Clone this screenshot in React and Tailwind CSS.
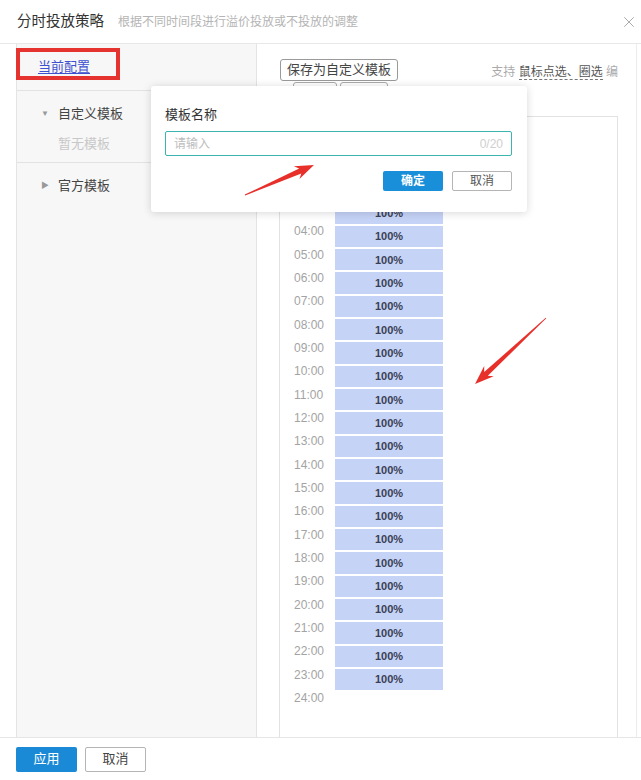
import React from "react";
import { X } from "lucide-react";

const times = Array.from({ length: 25 }, (_, i) => `${String(i).padStart(2, "0")}:00`);

function arrowPoints(x1, y1, x2, y2) {
  const dx = x2 - x1, dy = y2 - y1;
  const len = Math.hypot(dx, dy);
  const ux = dx / len, uy = dy / len;
  const nx = -uy, ny = ux;
  const headLen = 17;
  const bx = x2 - ux * headLen, by = y2 - uy * headLen;
  const p = (x, y) => `${x.toFixed(1)},${y.toFixed(1)}`;
  return [
    p(x1 + nx * 0.4, y1 + ny * 0.4),
    p(bx + nx * 2.6 + ux * 2, by + ny * 2.6 + uy * 2),
    p(bx + nx * 7 - ux * 2, by + ny * 7 - uy * 2),
    p(x2, y2),
    p(bx - nx * 7 - ux * 2, by - ny * 7 - uy * 2),
    p(bx - nx * 2.6 + ux * 2, by - ny * 2.6 + uy * 2),
    p(x1 - nx * 0.4, y1 - ny * 0.4),
  ].join(" ");
}

export default function App() {
  return (
    <div className="relative w-[641px] h-[780px] bg-white overflow-hidden flex flex-col font-['Liberation_Sans','Noto_Sans_CJK_SC',sans-serif] text-[#333]">
      {/* Header */}
      <div className="h-[44px] shrink-0 flex items-center pl-[17px] pr-[3px] border-b border-[#e8e8e8]">
        <span className="text-[14.5px] text-[#333]">分时投放策略</span>
        <span className="ml-[14px] text-[12px] text-[#b4b4b4]">根据不同时间段进行溢价投放或不投放的调整</span>
        <X className="ml-auto" size={18} strokeWidth={1.1} color="#999" />
      </div>

      {/* Body */}
      <div className="flex-1 min-h-0 flex">
        {/* Left panel */}
        <div className="ml-[16px] w-[241px] shrink-0 bg-[#f7f7f7] border-l border-r border-[#e4e4e4] flex flex-col">
          <div className="h-[47px] border-b border-[#e2e2e2] pt-[4px]">
            <div className="w-[104px] h-[32px] -ml-px border-4 border-[#e5332f] flex items-center pl-[18px]">
              <span className="mt-[6px] text-[13px] text-[#3f51cf] underline underline-offset-2">当前配置</span>
            </div>
          </div>
          <div className="h-[72px] border-b border-[#e2e2e2] pt-[13px]">
            <div className="h-[20px] flex items-center pl-[24px]">
              <span className="text-[8px] text-[#999] w-[17px]">▼</span>
              <span className="text-[13px] text-[#444]">自定义模板</span>
            </div>
            <div className="h-[20px] mt-[10px] flex items-center pl-[41px]">
              <span className="text-[13px] text-[#c8c8c8]">暂无模板</span>
            </div>
          </div>
          <div className="pt-[13px]">
            <div className="h-[20px] flex items-center pl-[24px]">
              <span className="text-[8px] text-[#999] w-[17px]">▶</span>
              <span className="text-[13px] text-[#444]">官方模板</span>
            </div>
          </div>
        </div>

        {/* Right panel */}
        <div className="flex-1 min-w-0 flex flex-col pl-[22px] pt-[15px]">
          <div className="w-[339px] flex items-center">
            <div className="ml-px h-[22px] px-[6px] flex items-center border border-[#9a9a9a] rounded-[3px] text-[13px] text-[#444] whitespace-nowrap">
              保存为自定义模板
            </div>
            <div className="ml-auto whitespace-nowrap pt-[4px] text-[12px] text-[#aaa]">
              支持 <span className="text-[#555] border-b border-dashed border-[#777]">鼠标点选、圈选</span> 编
            </div>
          </div>
          <div className="h-[20px] mt-px ml-[14px] flex gap-[3px]">
            <div className="w-[44px] h-[20px] border border-[#aaa] rounded-[3px]" />
            <div className="w-[48px] h-[20px] border border-[#aaa] rounded-[3px]" />
          </div>
          <div className="mt-[14px] w-[339px] flex-1 min-h-0 border border-b-0 border-[#e2e2e2] flex overflow-hidden">
            <div className="w-[55px] shrink-0 pl-[14px] pt-[10px]">
              {times.map((t) => (
                <div key={t} className="h-[23.33px] leading-[23.33px] text-[12px] text-[#a3a3a3]">
                  {t}
                </div>
              ))}
            </div>
            <div className="w-[108px] shrink-0 pt-[15.5px]">
              {times.slice(0, 24).map((t) => (
                <div
                  key={t}
                  className="h-[21.33px] mb-[2px] bg-[#c5d3f7] flex items-center justify-center text-[11px] font-bold text-[#3a3f55]"
                >
                  100%
                </div>
              ))}
            </div>
          </div>
        </div>
        <div className="w-[5px] shrink-0 border-l border-[#ececec]" />
      </div>

      {/* Footer */}
      <div className="h-[43px] shrink-0 border-t border-[#e6e6e6] flex items-center gap-[8px] pl-[16px]">
        <div className="w-[61px] h-[25px] bg-[#1b8ad6] rounded-[2px] flex items-center justify-center text-[13px] text-white">
          应用
        </div>
        <div className="w-[61px] h-[25px] border border-[#b5b5b5] rounded-[2px] flex items-center justify-center text-[13px] text-[#444]">
          取消
        </div>
      </div>

      {/* Popup */}
      <div className="absolute left-[151px] top-[86px] w-[376px] h-[126px] bg-white rounded-[3px] shadow-[0_1px_8px_rgba(0,0,0,0.16)] pl-[14px] pr-[15px] pt-[21px]">
        <div className="text-[13px] leading-[16px] text-[#333]">模板名称</div>
        <div className="mt-[8px] h-[25px] border border-[#3bb5ad] rounded-[2px] flex items-center px-[8px] text-[12px]">
          <span className="text-[#bdbdbd]">请输入</span>
          <span className="ml-auto text-[#cfcfcf]">0/20</span>
        </div>
        <div className="mt-[15px] flex justify-end gap-[9px]">
          <div className="w-[60px] h-[20px] bg-[#1a8fd9] rounded-[2px] flex items-center justify-center text-[12px] font-bold text-white">
            确定
          </div>
          <div className="w-[60px] h-[20px] border border-[#b5b5b5] rounded-[2px] flex items-center justify-center text-[12px] text-[#555]">
            取消
          </div>
        </div>
      </div>

      {/* Red annotation arrows */}
      <svg className="absolute inset-0 pointer-events-none" width="641" height="780" viewBox="0 0 641 780">
        <polygon points={arrowPoints(245, 195, 314, 165)} fill="#e8302b" />
        <polygon points={arrowPoints(546, 318, 475, 384)} fill="#e8302b" />
      </svg>
    </div>
  );
}
